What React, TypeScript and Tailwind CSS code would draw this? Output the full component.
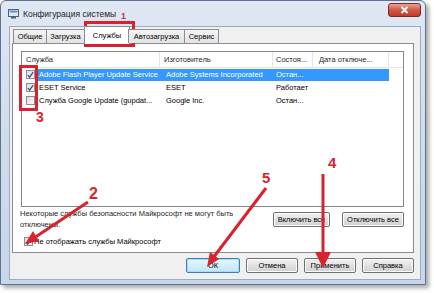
import React from "react";

const rows = [
  { checked: true, selected: true, name: "Adobe Flash Player Update Service", maker: "Adobe Systems Incorporated", state: "Остан..." },
  { checked: true, selected: false, name: "ESET Service", maker: "ESET", state: "Работает" },
  { checked: false, selected: false, name: "Служба Google Update (gupdat...", maker: "Google Inc.", state: "Остан..." },
];

const tabs = [
  { label: "Общие", w: "w-[34px]" },
  { label: "Загрузка", w: "w-[39px]" },
  { label: "Службы", w: "w-[46px]", active: true },
  { label: "Автозагрузка", w: "w-[57px]" },
  { label: "Сервис", w: "w-[35px]" },
];

const CheckBox = ({ checked }: { checked: boolean }) => (
  <div className="w-[9px] h-[9px] border border-[#8e8f8f] bg-gradient-to-br from-[#dcdcdc] to-[#fbfbfb] flex items-center justify-center shrink-0">
    {checked && (
      <svg width="8" height="8" viewBox="0 0 8 8">
        <path d="M1 4.2 L3 6.5 L7 0.8" fill="none" stroke="#2f4f8f" strokeWidth="1.4" />
      </svg>
    )}
  </div>
);

const Button = ({ label, w, primary }: { label: string; w: string; primary?: boolean }) => (
  <div
    className={`${w} h-[15px] rounded-[2px] border flex items-center justify-center text-[7.5px] text-black ${
      primary
        ? "border-[#3c7fb1] bg-gradient-to-b from-[#eaf6fd] to-[#bee6fd] shadow-[inset_0_0_0_1px_#a8dcf8]"
        : "border-[#707070] bg-gradient-to-b from-[#f2f2f2] to-[#d0d0d0] shadow-[inset_0_0_0_1px_#fcfcfc]"
    }`}
  >
    {label}
  </div>
);

export default function App() {
  return (
    <div className="w-[434px] h-[293px] bg-white relative overflow-hidden font-['Liberation_Sans',Arial,sans-serif] text-black">
      {/* Window */}
      <div className="w-[426px] h-[285px] flex flex-col bg-gradient-to-b from-[#dfe8f3] via-[#cfdcec] to-[#c7d6e8] border border-[#5e7391] rounded-t-[6px] shadow-[3px_3px_4px_rgba(0,0,0,0.35)]">
        {/* Title bar */}
        <div className="h-[25px] flex items-start shrink-0">
          <div className="flex items-center gap-[4px] pl-[7px] pt-[7px]">
            <svg width="11" height="10" viewBox="0 0 11 10">
              <rect x="0.5" y="0.5" width="10" height="7" fill="#dde7f3" stroke="#4f5f7f" />
              <rect x="1.5" y="1.5" width="8" height="2" fill="#6f8fc0" />
              <rect x="3" y="8" width="5" height="1.5" fill="#4f5f7f" />
            </svg>
            <span className="text-[8.5px] text-[#1e1e1e]">Конфигурация системы</span>
          </div>
          <div className="ml-auto mr-[4px] mt-[2px] w-[33px] h-[14px] rounded-[3px] border border-[#7a2a22] bg-gradient-to-b from-[#e7a193] via-[#cf5a48] to-[#c23a2a] flex items-center justify-center">
            <svg width="9" height="8" viewBox="0 0 9 8">
              <path d="M1.5 1 L7.5 7 M7.5 1 L1.5 7" stroke="#ffffff" strokeWidth="1.8" />
            </svg>
          </div>
        </div>

        {/* Client area */}
        <div className="flex-1 ml-[8px] mr-[4px] mb-[4px] bg-[#f0f0f0] border border-[#9aabc2] flex flex-col">
          {/* Tabs */}
          <div className="h-[16px] flex items-end pl-[3px] relative z-10 shrink-0">
            {tabs.map((t) =>
              t.active ? (
                <div key={t.label} className={`${t.w} h-[18px] -mx-[1px] bg-white border border-b-0 border-[#898c95] flex items-center justify-center text-[7.5px] -mb-[1px]`}>
                  {t.label}
                </div>
              ) : (
                <div key={t.label} className={`${t.w} h-[14px] bg-gradient-to-b from-[#f3f3f3] to-[#e3e3e3] border border-b-0 border-[#898c95] -ml-[1px] first:ml-0 flex items-center justify-center text-[7.5px]`}>
                  {t.label}
                </div>
              )
            )}
          </div>

          {/* Tab page */}
          <div className="h-[210px] ml-[2px] mr-[6px] bg-white border border-[#898c95] pl-[8px] pr-[9px] pt-[7px] flex flex-col shrink-0">
            {/* List view */}
            <div className="h-[156px] border border-[#828790] bg-white shrink-0 text-[7.5px]">
              <div className="h-[16px] flex border-b border-[#e5e5e5] text-[#1e1e1e]">
                <div className="w-[138px] pl-[4px] flex items-center border-r border-[#e5e5e5]">Служба</div>
                <div className="w-[113px] pl-[4px] flex items-center border-r border-[#e5e5e5]">Изготовитель</div>
                <div className="w-[40px] pl-[3px] flex items-center border-r border-[#e5e5e5]">Состоя...</div>
                <div className="w-[76px] pl-[6px] flex items-center border-r border-[#e5e5e5]">Дата отключе...</div>
              </div>
              {rows.map((r) => (
                <div key={r.name} className="h-[13px] flex items-center">
                  <div className="w-[15px] flex justify-center pl-[2px]">
                    <CheckBox checked={r.checked} />
                  </div>
                  <div className={`flex h-[12px] items-center ${r.selected ? "bg-[#3399ff] text-white" : ""}`}>
                    <div className="w-[123px] pl-[2px] whitespace-nowrap overflow-hidden">{r.name}</div>
                    <div className="w-[113px] pl-[6px] whitespace-nowrap">{r.maker}</div>
                    <div className="w-[40px] pl-[3px] whitespace-nowrap">{r.state}</div>
                    <div className="w-[76px]" />
                  </div>
                </div>
              ))}
            </div>

            {/* Lower section */}
            <div className="flex mt-[1px] -ml-[1px]">
              <p className="w-[250px] text-[7.5px] leading-[11px] text-[#1e1e1e]">
                Некоторые службы безопасности Майкрософт не могут быть отключены.
              </p>
              <div className="ml-auto flex gap-[12px] mt-[4px] mr-[0px]">
                <Button label="Включить все" w="w-[57px]" />
                <Button label="Отключить все" w="w-[62px]" />
              </div>
            </div>
            <div className="flex items-center gap-[1px] mt-[6px] pl-[3px] text-[7.5px]">
              <CheckBox checked />
              <span>Не отображать службы Майкрософт</span>
            </div>
          </div>

          {/* Dialog buttons */}
          <div className="flex justify-end gap-[6px] mt-[5px] mr-[6px]">
            <Button label="ОК" w="w-[54px]" primary />
            <Button label="Отмена" w="w-[52px]" />
            <Button label="Применить" w="w-[52px]" />
            <Button label="Справка" w="w-[52px]" />
          </div>
        </div>
      </div>

      {/* Annotations */}
      <svg className="absolute inset-0 pointer-events-none" width="434" height="293" viewBox="0 0 434 293">
        <rect x="85.5" y="22.5" width="48" height="23" fill="none" stroke="#d8232f" strokeWidth="3" />
        <rect x="20.5" y="66.5" width="16" height="43" fill="none" stroke="#d8232f" strokeWidth="3" />
        <line x1="88" y1="202" x2="34" y2="238" stroke="#d8232f" strokeWidth="3" />
        <polygon points="25,244 39,241 33,231" fill="#d8232f" />
        <line x1="266" y1="188" x2="213" y2="258" stroke="#d8232f" strokeWidth="3" />
        <polygon points="207,267 219,259 210,252" fill="#d8232f" />
        <line x1="323" y1="174" x2="323" y2="254" stroke="#d8232f" strokeWidth="3" />
        <polygon points="315,252 331,252 323,268" fill="#d8232f" />
      </svg>
      <span className="absolute left-[121px] top-[12px] text-[9px] font-bold leading-none text-[#c8305a]">1</span>
      <span className="absolute left-[89px] top-[186px] text-[16px] font-bold leading-none text-[#d8232f]">2</span>
      <span className="absolute left-[36px] top-[110px] text-[14px] font-bold leading-none text-[#d8232f]">3</span>
      <span className="absolute left-[328px] top-[155px] text-[15px] font-bold leading-none text-[#d8232f]">4</span>
      <span className="absolute left-[262px] top-[170px] text-[15px] font-bold leading-none text-[#d8232f]">5</span>
    </div>
  );
}
